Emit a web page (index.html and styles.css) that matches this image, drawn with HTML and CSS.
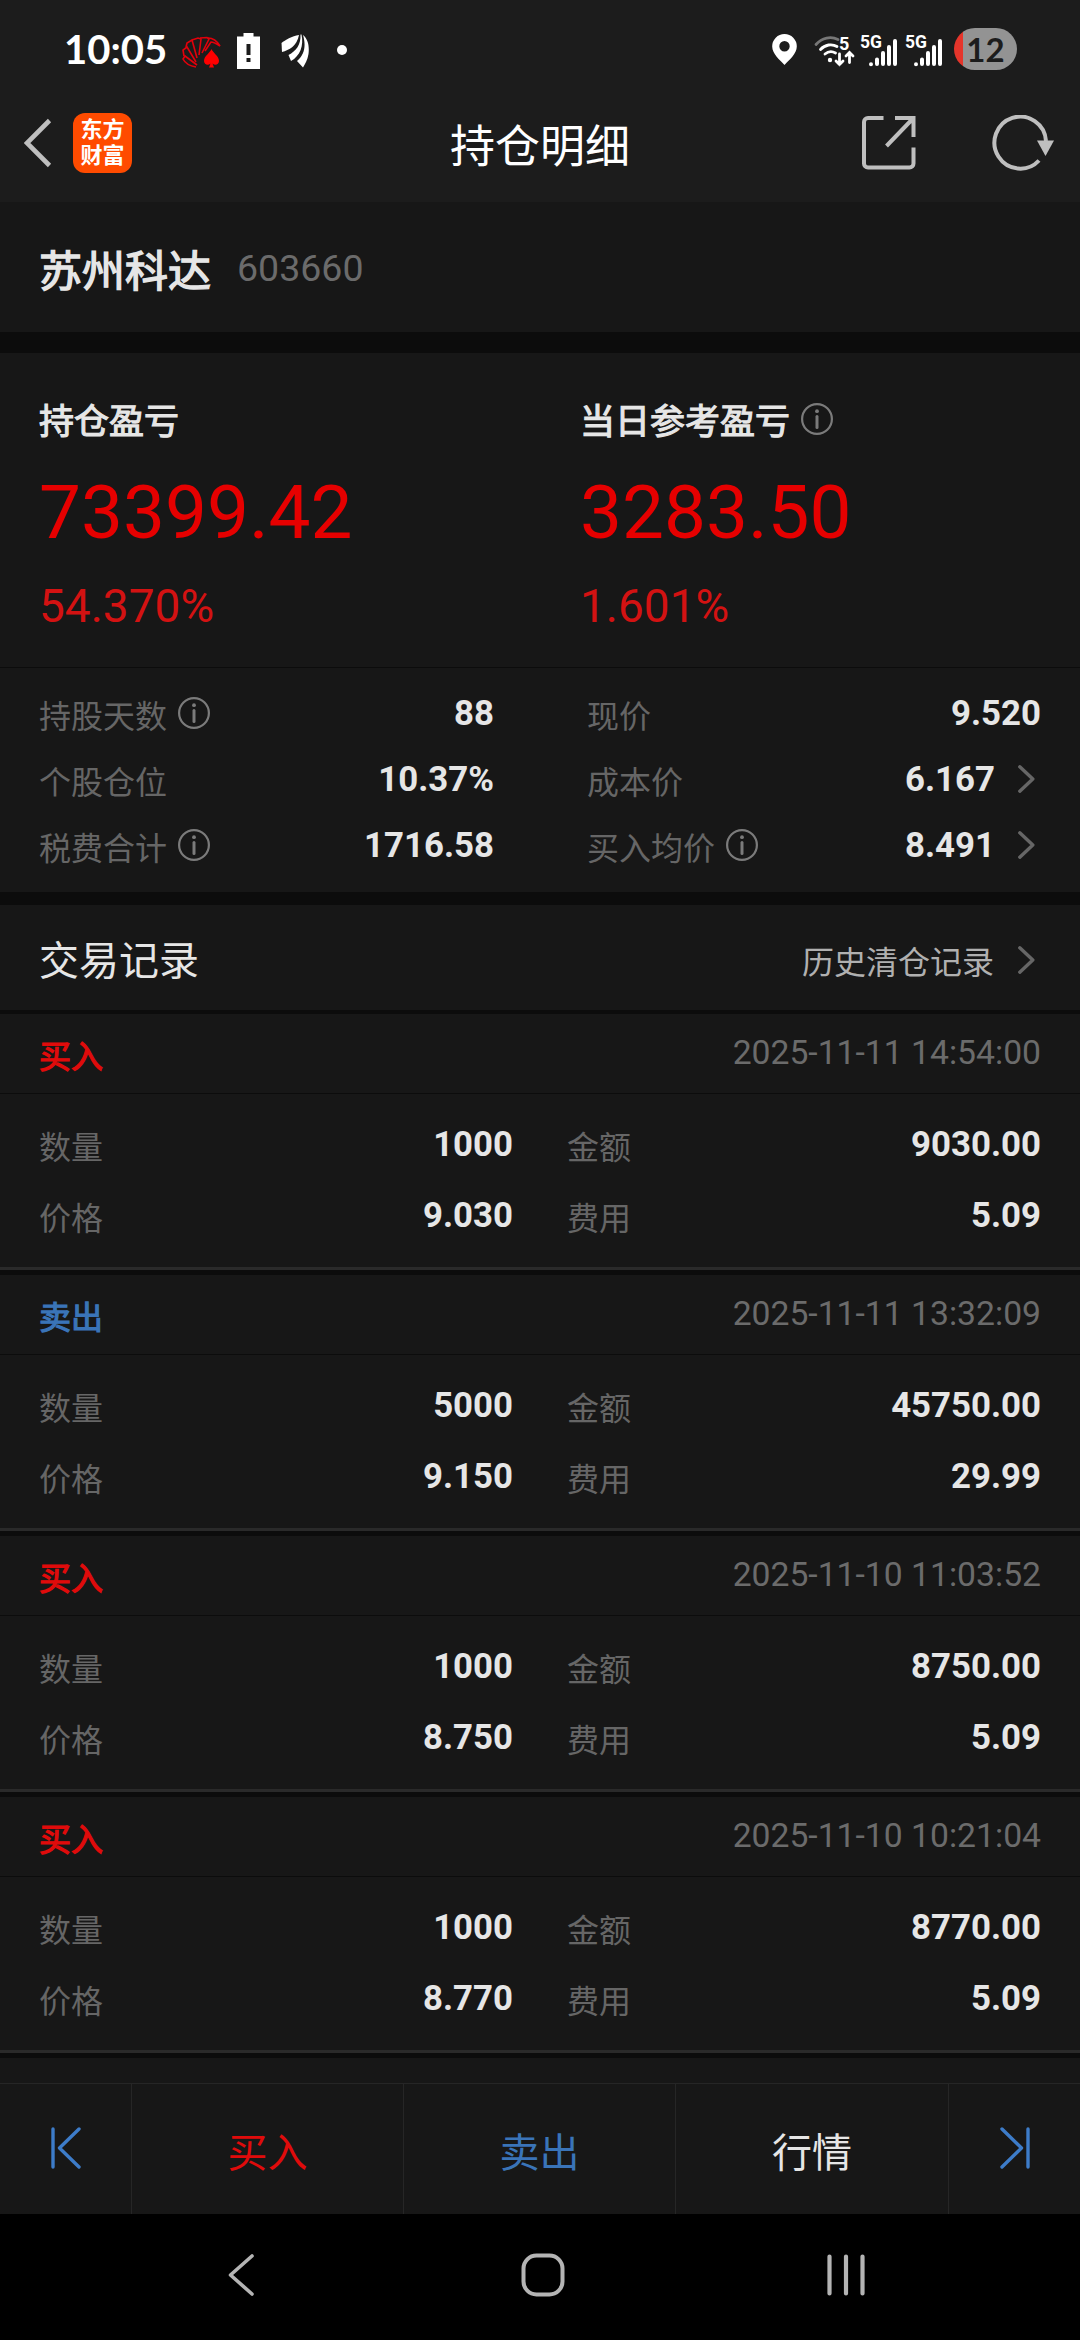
FILE: index.html
```html
<!DOCTYPE html>
<html lang="zh-CN">
<head>
  <meta charset="UTF-8">
  <meta name="viewport" content="width=device-width, initial-scale=1">
  <title>持仓明细</title>
  <link rel="stylesheet" href="styles.css">
</head>
<body>
  <svg class="defs" width="0" height="0">
    <symbol id="info" viewBox="0 0 32 32">
      <circle cx="16" cy="16" r="14.9" fill="none" stroke="currentColor" stroke-width="2.2"/>
      <circle cx="16" cy="8.2" r="1.9" fill="currentColor"/>
      <path d="M16 13.5V24.5" stroke="currentColor" stroke-width="3" stroke-linecap="round"/>
    </symbol>
    <symbol id="arrow" viewBox="0 0 17 28">
      <path d="M1.8 1.8L14.8 14L1.8 26.2" fill="none" stroke="currentColor" stroke-width="3.4" stroke-linecap="round" stroke-linejoin="round"/>
    </symbol>
    <symbol id="bars" viewBox="0 0 36 32">
      <g stroke="#fff" stroke-width="4" stroke-linecap="round">
        <path d="M10 29.2V29.3M16 24.5V29M22 18V29M28 12V29M34 6V29"/>
      </g>
    </symbol>
  </svg>

  <div class="status">
    <span class="time">10:05</span>
    <svg class="ic-cards" width="39" height="32" viewBox="0 0 39 32">
      <g fill="none" stroke="#e3000b" stroke-width="1.6">
        <path d="M14 31C8 30 3 27 1 23L3 20L15 29"/>
        <path d="M2 20L1 14L5 11L14 26"/>
        <path d="M4 11L5 7L10 4L15 22"/>
        <path d="M10 4L16 2L19 3L17 19"/>
        <path d="M18 2L25 1.5L27 3L20 17"/>
        <path d="M26 2C31 2 35 5 38 10C35 8 32 6 29 6L23 15"/>
      </g>
      <path d="M29.500 13C31 17 37 20 37 25C37 28.500 33 30 30.500 27.500L32 31.500H27L28.500 27.500C26 30 22 28.500 22 25C22 20 28 17 29.500 13Z" fill="#f00"/>
    </svg>
    <svg class="ic-lowbat" width="23" height="36" viewBox="0 0 23 36">
      <path d="M0 3.500H6.500V0H16.500V3.500H23V36H0Z" fill="#fff"/>
      <path d="M9.500 11H13.500V22H9.500ZM9.500 25H13.500V29H9.500Z" fill="#1c1c1c"/>
    </svg>
    <svg class="ic-leaf" width="28" height="34" viewBox="0 0 28 34">
      <g fill="#fff">
        <path d="M18 1C11 2 4 6 .5 9L1 18C8 16 16 12 18 1Z"/>
        <path d="M19.500 .5C20 11 15 17 7.500 21L10 27C19 22 23 12 20.500 .5Z"/>
        <path d="M22 1C27 5 28.500 12 27.500 20C26.500 26 24 30 22 33.500L16 27C24 20 25 11 22 1Z"/>
      </g>
    </svg>
    <span class="dot"></span>

    <div class="status-right">
      <svg width="25" height="31" viewBox="0 0 25 31">
        <path fill="#fff" fill-rule="evenodd" d="M12.500 0A12.300 12.300 0 0 0 .2 12.500C.2 20 8 26 12.500 31C17 26 24.800 20 24.800 12.500A12.300 12.300 0 0 0 12.500 0ZM12.500 7A5.200 5.200 0 1 1 12.500 17.400A5.200 5.200 0 1 1 12.500 7Z"/>
      </svg>
      <div class="wifi">
        <svg width="42" height="32" viewBox="0 0 42 32">
          <g fill="none" stroke="#fff" stroke-width="2.800" stroke-linecap="round">
            <path d="M2 9.500C8 2.500 17 1 24 4.500" stroke="#777"/>
            <path d="M6.500 14.500C11 9.500 18 8.500 23 11.500"/>
            <path d="M11 19C14 16.500 18 16 21.500 18"/>
            <path d="M25.500 19V29.500M22 26L25.500 29.500L29 26M35.500 27.500V17.500M32 21L35.500 17.500L39 21"/>
          </g>
          <circle cx="16" cy="25" r="2.200" fill="#fff"/>
        </svg>
        <b>5</b>
      </div>
      <span class="signal"><b>5G</b><svg width="36" height="32"><use href="#bars"/></svg></span>
      <span class="signal"><b>5G</b><svg width="36" height="32"><use href="#bars"/></svg></span>
      <span class="battery">12</span>
    </div>
  </div>

  <header class="topbar">
    <div class="side">
      <svg width="28" height="50" viewBox="0 0 28 50">
        <path d="M25.500 2.500L3 25L25.500 47.500" fill="none" stroke="#bfbfbf" stroke-width="4.600"/>
      </svg>
      <span class="logo">东方<br>财富</span>
    </div>
    <h1>持仓明细</h1>
    <div class="side side-right">
      <svg width="54" height="54" viewBox="0 0 54 54">
        <g fill="none" stroke="#bfbfbf" stroke-width="4">
          <path d="M21.500 2H6A4 4 0 0 0 2 6V47.500A4 4 0 0 0 6 51.500H47.500A4 4 0 0 0 51.500 47.500V31.500"/>
          <path d="M33 2H51.500V21M51 2.500L24.500 30"/>
        </g>
      </svg>
      <svg width="62" height="56" viewBox="0 0 62 56">
        <path d="M47 45.500A25.800 26 0 1 1 54 26" fill="none" stroke="#bfbfbf" stroke-width="4"/>
        <path d="M45 25.500H62L53.500 41Z" fill="#bfbfbf"/>
      </svg>
    </div>
  </header>

  <section class="stock">
    <h2>苏州科达</h2>
    <span class="code">603660</span>
  </section>

  <section class="profit">
    <div class="profit-item">
      <div class="profit-title">持仓盈亏</div>
      <div class="amount">73399.42</div>
      <div class="percent">54.370%</div>
    </div>
    <div class="profit-item">
      <div class="profit-title">当日参考盈亏<svg class="info"><use href="#info"/></svg></div>
      <div class="amount">3283.50</div>
      <div class="percent">1.601%</div>
    </div>
  </section>

  <section class="stats">
    <div class="row"><span class="label">持股天数</span><svg class="info"><use href="#info"/></svg><span class="value">88</span></div>
    <div class="row"><span class="label">现价</span><span class="value">9.520</span></div>
    <div class="row"><span class="label">个股仓位</span><span class="value">10.37%</span></div>
    <div class="row"><span class="label">成本价</span><span class="value">6.167</span><svg class="arrow"><use href="#arrow"/></svg></div>
    <div class="row"><span class="label">税费合计</span><svg class="info"><use href="#info"/></svg><span class="value">1716.58</span></div>
    <div class="row"><span class="label">买入均价</span><svg class="info"><use href="#info"/></svg><span class="value">8.491</span><svg class="arrow"><use href="#arrow"/></svg></div>
  </section>

  <section class="records-head">
    <h3>交易记录</h3>
    <a class="history">历史清仓记录</a>
    <svg class="arrow"><use href="#arrow"/></svg>
  </section>

  <main class="records">
    <article class="record">
      <div class="record-head"><span class="type buy">买入</span><time>2025-11-11 14:54:00</time></div>
      <div class="record-body">
        <div class="row"><span class="label">数量</span><span class="value">1000</span></div>
        <div class="row"><span class="label">金额</span><span class="value">9030.00</span></div>
        <div class="row"><span class="label">价格</span><span class="value">9.030</span></div>
        <div class="row"><span class="label">费用</span><span class="value">5.09</span></div>
      </div>
    </article>
    <article class="record">
      <div class="record-head"><span class="type sell">卖出</span><time>2025-11-11 13:32:09</time></div>
      <div class="record-body">
        <div class="row"><span class="label">数量</span><span class="value">5000</span></div>
        <div class="row"><span class="label">金额</span><span class="value">45750.00</span></div>
        <div class="row"><span class="label">价格</span><span class="value">9.150</span></div>
        <div class="row"><span class="label">费用</span><span class="value">29.99</span></div>
      </div>
    </article>
    <article class="record">
      <div class="record-head"><span class="type buy">买入</span><time>2025-11-10 11:03:52</time></div>
      <div class="record-body">
        <div class="row"><span class="label">数量</span><span class="value">1000</span></div>
        <div class="row"><span class="label">金额</span><span class="value">8750.00</span></div>
        <div class="row"><span class="label">价格</span><span class="value">8.750</span></div>
        <div class="row"><span class="label">费用</span><span class="value">5.09</span></div>
      </div>
    </article>
    <article class="record">
      <div class="record-head"><span class="type buy">买入</span><time>2025-11-10 10:21:04</time></div>
      <div class="record-body">
        <div class="row"><span class="label">数量</span><span class="value">1000</span></div>
        <div class="row"><span class="label">金额</span><span class="value">8770.00</span></div>
        <div class="row"><span class="label">价格</span><span class="value">8.770</span></div>
        <div class="row"><span class="label">费用</span><span class="value">5.09</span></div>
      </div>
    </article>
  </main>

  <footer class="tabs">
    <a class="tab">
      <svg width="30" height="42" viewBox="0 0 30 42">
        <path d="M2 2V40M28 2L8.500 21L28 40" fill="none" stroke="#3d7cc9" stroke-width="3.400" stroke-linecap="round" stroke-linejoin="round"/>
      </svg>
    </a>
    <a class="tab buy">买入</a>
    <a class="tab sell">卖出</a>
    <a class="tab">行情</a>
    <a class="tab">
      <svg width="30" height="42" viewBox="0 0 30 42">
        <path d="M28 2V40M2 2L21.500 21L2 40" fill="none" stroke="#3d7cc9" stroke-width="3.400" stroke-linecap="round" stroke-linejoin="round"/>
      </svg>
    </a>
  </footer>

  <!-- system navigation -->
  <nav class="sysnav">
    <svg width="28" height="44" viewBox="0 0 28 44">
      <path d="M25 3L3.500 22L25 41" fill="none" stroke="#b4b4b4" stroke-width="3.600" stroke-linecap="round" stroke-linejoin="round"/>
    </svg>
    <svg class="home" width="44" height="44" viewBox="0 0 44 44">
      <rect x="2.500" y="2.500" width="39" height="39" rx="13" fill="none" stroke="#b4b4b4" stroke-width="4"/>
    </svg>
    <svg width="40" height="44" viewBox="0 0 40 44">
      <path d="M3.500 3.500V40.500M20 3.500V40.500M36.500 3.500V40.500" stroke="#b4b4b4" stroke-width="4.200" stroke-linecap="round"/>
    </svg>
  </nav>
</body>
</html>
```
FILE: styles.css
```css
* { box-sizing: border-box; margin: 0; padding: 0; }
body { width: 1080px; height: 2340px; display: flex; flex-direction: column; overflow: hidden; background: #171717; color: #e6e6e6; font-family: Roboto, "Noto Sans CJK SC", sans-serif; }
svg { display: block; flex: none; }
h1, h2, h3 { font-weight: normal; }
.defs { position: absolute; }
.buy { color: #e00b0b; }
.sell { color: #3a74b8; }

/* status bar */
.status { height: 98px; flex: none; display: flex; align-items: center; padding: 0 63px 0 64px; background: #1c1c1c; }
.time { width: 118px; color: #fff; font: bold 40px/40px Lato, sans-serif; }
.ic-cards { margin-top: 6px; }
.ic-lowbat { margin-left: 16px; margin-top: 4px; }
.ic-leaf { margin-left: 21px; margin-top: 3px; }
.dot { width: 10px; height: 10px; margin-left: 28px; margin-top: 2px; border-radius: 50%; background: #fff; }
.status-right { margin-left: auto; display: flex; align-items: center; }
.wifi { position: relative; margin-left: 17px; margin-top: 4px; }
.wifi b { position: absolute; left: 25px; top: -2px; color: #fff; font-size: 18px; line-height: 22px; }
.signal { display: flex; width: 36px; margin-left: 5px; margin-top: 4px; position: relative; }
.signal + .signal { margin-left: 9px; }
.signal b { position: absolute; left: -1px; top: -4px; color: #fff; font-size: 17.5px; line-height: 22px; }
.battery { width: 63px; height: 42px; margin-left: 12px; border-radius: 21px; background: linear-gradient(to right, #e5352b 9px, #939393 9px); color: #1c1c1c; font: bold 33px/42px Lato, sans-serif; text-align: center; }

/* page header */
.topbar { height: 104px; flex: none; display: flex; justify-content: space-between; padding: 0 26px 0 24px; background: #1c1c1c; }
.topbar h1 { padding: 12px 0 0 2px; color: #fff; font-size: 45px; line-height: 76px; }
.side { width: 200px; height: 90px; display: flex; align-items: center; gap: 21px; }
.side-right { justify-content: flex-end; gap: 76px; }
.logo { width: 59px; height: 60px; border-radius: 12px; padding: 4px 0; background: #ff4b00; color: #fff; font-size: 22px; font-weight: bold; line-height: 26px; text-align: center; }

.stock { height: 151px; flex: none; display: flex; align-items: center; gap: 26px; padding: 2px 40px 0 39px; border-bottom: 21px solid #0c0c0c; }
.stock h2 { font-size: 43px; line-height: 50px; padding-top: 7px; -webkit-text-stroke: 1.4px; }
.code { color: #6b6b6b; font-size: 37.5px; line-height: 44px; }

.profit { height: 315px; flex: none; display: grid; grid-template-columns: 541px 539px; border-bottom: 1px solid #0c0c0c; }
.profit-item { padding: 48px 39px 0; }
.profit-title { display: flex; gap: 11px; font-size: 35px; line-height: 44px; -webkit-text-stroke: 1.1px; }
.profit-title .info { margin-top: 2px; }
.amount { margin-top: 25px; color: #e60000; font-size: 74.7px; line-height: 86px; }
.percent { margin-top: 22px; color: #d31212; font-size: 46px; line-height: 56px; }
.info { width: 32px; height: 32px; color: #7b7b7b; }
.arrow { width: 17px; height: 28px; color: #666; }

.stats { height: 237px; flex: none; display: grid; grid-template-columns: 455px 454px; grid-auto-rows: 66px; column-gap: 93px; padding: 12px 39px 0 39px; border-bottom: 13px solid #0c0c0c; }
.row { display: flex; align-items: center; }
.label { padding-top: 2px; color: #666; font-size: 32px; }
.value { margin-left: auto; font-size: 34.8px; font-weight: bold; }
.row .info { margin-left: 11px; }
.row .arrow { margin: 0 6px 0 23px; }

.records-head { height: 109px; flex: none; display: flex; align-items: center; padding: 0 45px 0 39px; border-bottom: 4px solid #0c0c0c; }
.records-head h3 { margin-right: auto; padding-top: 0; font-size: 40px; }
.history { padding-top: 5px; color: #b0b0b0; font-size: 32px; }
.records-head .arrow { margin-left: 24px; margin-top: 4px; }

.records { flex: 1; min-height: 0; }
.record { height: 261px; border-bottom: 5px solid #0c0c0c; }
.record-head { height: 80px; display: flex; align-items: center; justify-content: space-between; padding: 0 39px; border-bottom: 1px solid #0c0c0c; }
.type { font-size: 32px; -webkit-text-stroke: 1.2px; }
.record time { padding-bottom: 3px; color: #6b6b6b; font-size: 33.7px; }
.record-body { height: 176px; display: grid; grid-template-columns: 474px 474px; grid-auto-rows: 71px; column-gap: 54px; padding: 14px 39px 0; border-bottom: 3px solid #2a2a2a; }

.tabs { height: 131px; flex: none; display: grid; grid-template-columns: 132px 272px 272px 273px 131px; border-top: 1px solid #262626; }
.tab { display: flex; align-items: center; justify-content: center; padding-top: 1px; border-right: 1px solid #262626; font-size: 40px; }
.tab:last-child { border-right: none; }
.tab svg { margin-bottom: 3px; }

.sysnav { height: 126px; flex: none; display: flex; align-items: center; padding: 0 0 4px 227px; background: #000; }
.sysnav .home { margin: 0 261px 0 266px; }
```
